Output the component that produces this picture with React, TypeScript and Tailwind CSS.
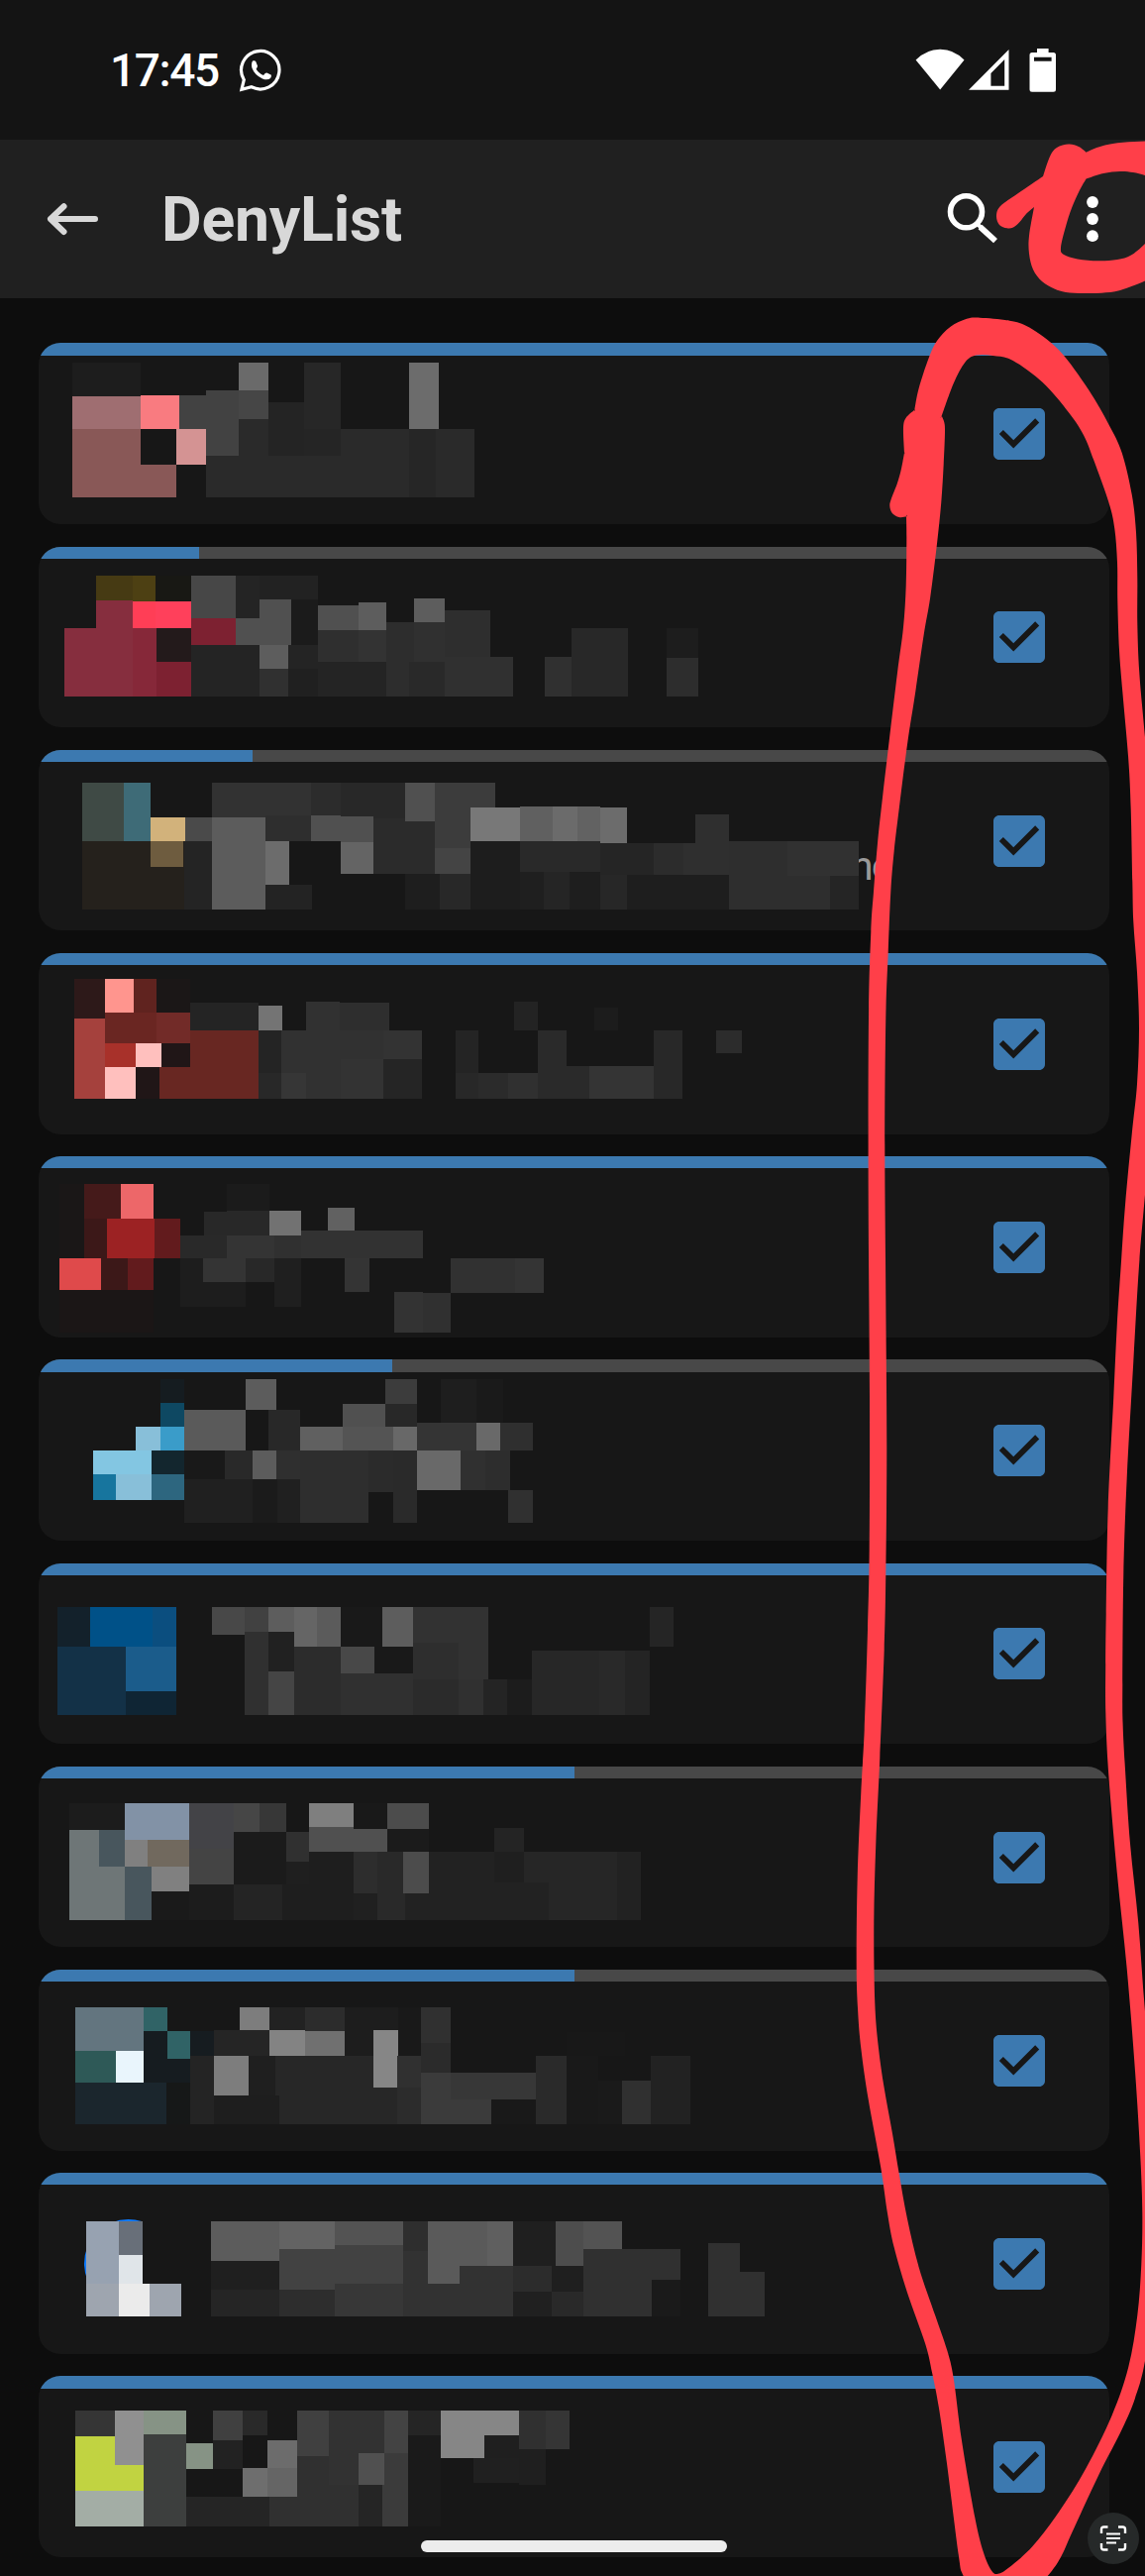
import React from "react";

type Block = [number, number, number, number, string];
type Point = [number, number];

interface Mosaic {
  /** horizontal and vertical units per pixel */
  sx: number;
  sy: number;
  /** page position of the unit origin */
  ox: number;
  oy: number;
  blocks: Block[];
}

interface App {
  progress: number;
  label?: string;
  mosaic: Mosaic;
}

const CARD_TOP = 346.4;
const CARD_PITCH = 205.2;

const narrow = (oy: number, blocks: Block[]): Mosaic => ({ sx: 2.17778, sy: 3, ox: 20, oy, blocks });
const wide = (oy: number, blocks: Block[]): Mosaic => ({ sx: 1.74222, sy: 3, ox: 20, oy, blocks });
const tall = (oy: number, blocks: Block[]): Mosaic => ({ sx: 1.96, sy: 2.48889, ox: 20, oy, blocks });

const apps: App[] = [
  {
    progress: 100,
    mosaic: narrow(330, [
      [115, 108, 266, 210, "#1d1d1d"],
      [115, 210, 266, 309, "#9f6e71"],
      [266, 207, 351, 309, "#f97b80"],
      [115, 309, 266, 516, "#895857"],
      [266, 417, 344, 516, "#895857"],
      [344, 309, 409, 417, "#d49393"],
      [351, 207, 409, 309, "#424242"],
      [409, 192, 481, 390, "#424242"],
      [481, 108, 547, 192, "#6a6a6a"],
      [481, 192, 547, 279, "#464646"],
      [481, 279, 547, 390, "#2a2a2a"],
      [409, 390, 1000, 516, "#2a2a2a"],
      [547, 228, 625, 390, "#242424"],
      [625, 108, 706, 309, "#272727"],
      [625, 309, 706, 390, "#252525"],
      [706, 309, 1000, 390, "#2a2a2a"],
      [856, 108, 921, 309, "#6c6c6c"],
      [856, 309, 915, 516, "#262626"],
    ]),
  },
  {
    progress: 15,
    mosaic: narrow(330, [
      [168, 753, 248, 828, "#463a13"],
      [248, 753, 298, 831, "#4d4013"],
      [298, 753, 377, 831, "#181814"],
      [168, 828, 248, 912, "#862e3e"],
      [98, 912, 248, 1119, "#862e3e"],
      [248, 831, 298, 912, "#ff3e56"],
      [298, 831, 377, 912, "#ff405b"],
      [248, 912, 301, 1119, "#862839"],
      [301, 912, 377, 1014, "#231a1b"],
      [301, 1014, 377, 1119, "#7d2131"],
      [377, 753, 475, 882, "#474747"],
      [377, 882, 475, 963, "#7d2131"],
      [475, 753, 527, 882, "#242424"],
      [527, 753, 656, 825, "#222222"],
      [527, 825, 597, 963, "#505050"],
      [475, 882, 527, 963, "#505050"],
      [597, 825, 656, 963, "#1b1b1b"],
      [377, 963, 527, 1119, "#242424"],
      [527, 963, 590, 1035, "#5d5d5d"],
      [527, 1035, 590, 1119, "#303030"],
      [590, 963, 656, 1035, "#242424"],
      [590, 1035, 656, 1119, "#202020"],
      [656, 843, 745, 918, "#505050"],
      [745, 834, 806, 918, "#5d5d5d"],
      [656, 918, 745, 1014, "#2f2f2f"],
      [745, 918, 806, 1014, "#333333"],
      [656, 1014, 806, 1119, "#242424"],
      [806, 894, 867, 1119, "#2d2d2d"],
      [867, 822, 934, 894, "#5d5d5d"],
      [867, 894, 934, 1014, "#303030"],
      [856, 1014, 934, 1119, "#292929"],
      [934, 858, 1034, 999, "#2e2e2e"],
      [934, 999, 1085, 1119, "#303030"],
      [1154, 999, 1213, 1119, "#303030"],
      [1213, 912, 1337, 1119, "#282828"],
      [1422, 912, 1492, 1002, "#1d1d1d"],
      [1422, 1002, 1492, 1119, "#2d2d2d"],
    ]),
  },
  {
    progress: 20,
    label: "ne",
    mosaic: wide(740, [
      [110, 150, 183, 327, "#3f4a45"],
      [183, 150, 230, 327, "#3e6b77"],
      [230, 255, 291, 327, "#d2b27b"],
      [291, 255, 338, 327, "#4a4a4a"],
      [110, 327, 289, 534, "#25211c"],
      [230, 327, 287, 405, "#6e5c3f"],
      [289, 327, 338, 534, "#242424"],
      [338, 150, 512, 255, "#323232"],
      [512, 150, 564, 249, "#2c2c2c"],
      [564, 150, 678, 258, "#282828"],
      [338, 255, 432, 534, "#5c5c5c"],
      [432, 249, 512, 327, "#2e2e2e"],
      [432, 327, 474, 459, "#6c6c6c"],
      [432, 459, 514, 534, "#232323"],
      [512, 249, 564, 327, "#505050"],
      [564, 252, 622, 330, "#505050"],
      [564, 330, 622, 426, "#646464"],
      [622, 258, 730, 426, "#2b2b2b"],
      [678, 150, 730, 267, "#505050"],
      [730, 150, 836, 348, "#3c3c3c"],
      [730, 348, 793, 426, "#444444"],
      [793, 225, 880, 327, "#787878"],
      [880, 222, 937, 327, "#606060"],
      [937, 222, 981, 327, "#6b6b6b"],
      [981, 222, 1021, 327, "#626262"],
      [1021, 225, 1068, 333, "#6c6c6c"],
      [678, 426, 739, 534, "#1e1e1e"],
      [739, 426, 793, 534, "#282828"],
      [793, 327, 880, 534, "#1d1d1d"],
      [880, 327, 1021, 420, "#292929"],
      [1021, 333, 1115, 429, "#252525"],
      [1115, 333, 1167, 429, "#2c2c2c"],
      [1167, 333, 1247, 429, "#2f2f2f"],
      [1188, 246, 1247, 333, "#2f2f2f"],
      [880, 420, 922, 534, "#1f1f1f"],
      [922, 420, 967, 534, "#252525"],
      [967, 420, 1021, 534, "#1e1e1e"],
      [1021, 429, 1068, 534, "#272727"],
      [1068, 429, 1247, 534, "#1e1e1e"],
      [1247, 327, 1350, 534, "#2e2e2e"],
      [1350, 327, 1476, 432, "#313131"],
      [1350, 432, 1425, 534, "#2e2e2e"],
      [1425, 432, 1476, 534, "#252525"],
    ]),
  },
  {
    progress: 100,
    mosaic: wide(740, [
      [96, 744, 150, 864, "#2d1919"],
      [150, 744, 200, 846, "#ff958e"],
      [200, 744, 240, 846, "#60231f"],
      [240, 744, 300, 846, "#1b1717"],
      [96, 864, 150, 1107, "#a5413d"],
      [150, 846, 240, 939, "#6a2622"],
      [240, 846, 300, 939, "#722b28"],
      [150, 939, 204, 1011, "#a8312a"],
      [204, 939, 249, 1011, "#ffc0be"],
      [249, 939, 300, 1011, "#201617"],
      [150, 1011, 204, 1107, "#ffc0be"],
      [204, 1011, 246, 1107, "#201617"],
      [300, 816, 420, 900, "#242424"],
      [300, 900, 420, 1107, "#682722"],
      [246, 1011, 300, 1107, "#682722"],
      [420, 825, 462, 900, "#747474"],
      [420, 900, 460, 1029, "#242424"],
      [420, 1029, 460, 1107, "#282828"],
      [460, 900, 639, 1107, "#313131"],
      [460, 1029, 504, 1107, "#363636"],
      [564, 987, 639, 1107, "#333333"],
      [504, 813, 563, 900, "#313131"],
      [563, 816, 650, 900, "#2e2e2e"],
      [639, 900, 707, 987, "#333333"],
      [639, 987, 707, 1107, "#252525"],
      [767, 900, 807, 1029, "#242424"],
      [767, 1029, 807, 1107, "#282828"],
      [807, 1029, 859, 1107, "#2b2b2b"],
      [859, 1029, 911, 1107, "#303030"],
      [869, 813, 911, 900, "#232323"],
      [911, 900, 962, 1107, "#2a2a2a"],
      [962, 1008, 1002, 1107, "#2a2a2a"],
      [1010, 831, 1052, 900, "#1c1c1c"],
      [1002, 1008, 1115, 1107, "#343434"],
      [1115, 900, 1166, 1107, "#282828"],
      [1225, 900, 1270, 969, "#2c2c2c"],
    ]),
  },
  {
    progress: 100,
    mosaic: narrow(1150, [
      [87, 135, 142, 360, "#1a1717"],
      [142, 135, 222, 240, "#451a1a"],
      [222, 135, 294, 240, "#ed6769"],
      [142, 240, 192, 360, "#3c1818"],
      [192, 240, 296, 360, "#9c2223"],
      [296, 240, 353, 360, "#621b1d"],
      [87, 360, 179, 456, "#df4a4b"],
      [179, 360, 237, 456, "#3c1818"],
      [237, 360, 294, 456, "#621b1d"],
      [87, 456, 294, 585, "#1b1616"],
      [455, 135, 549, 216, "#1b1b1b"],
      [405, 219, 455, 291, "#282828"],
      [455, 216, 549, 291, "#282828"],
      [549, 216, 618, 291, "#727272"],
      [677, 207, 736, 276, "#616161"],
      [353, 291, 455, 360, "#292929"],
      [455, 291, 560, 360, "#343434"],
      [560, 291, 618, 360, "#303030"],
      [618, 276, 886, 360, "#323232"],
      [353, 360, 497, 507, "#1d1d1d"],
      [403, 360, 497, 432, "#343434"],
      [497, 360, 560, 432, "#282828"],
      [560, 360, 618, 507, "#1f1f1f"],
      [714, 360, 769, 462, "#343434"],
      [823, 462, 886, 585, "#333333"],
      [886, 465, 947, 585, "#303030"],
      [947, 360, 1089, 465, "#313131"],
      [1089, 360, 1152, 465, "#343434"],
    ]),
  },
  {
    progress: 33,
    mosaic: narrow(1150, [
      [309, 726, 362, 798, "#151c20"],
      [309, 798, 362, 870, "#0e4862"],
      [255, 870, 309, 942, "#88bfd9"],
      [309, 870, 362, 942, "#3a9cc9"],
      [161, 942, 290, 1014, "#83c6e2"],
      [290, 942, 362, 1014, "#13262e"],
      [161, 1014, 211, 1092, "#17759e"],
      [211, 1014, 290, 1092, "#88bfd9"],
      [290, 1014, 362, 1092, "#2d667f"],
      [362, 819, 497, 942, "#5a5a5a"],
      [497, 726, 564, 819, "#5c5c5c"],
      [547, 819, 616, 942, "#282828"],
      [616, 870, 710, 942, "#606060"],
      [710, 801, 804, 870, "#505050"],
      [710, 870, 821, 942, "#545454"],
      [804, 726, 873, 801, "#3c3c3c"],
      [804, 801, 873, 870, "#282828"],
      [821, 870, 873, 942, "#686868"],
      [926, 726, 1004, 858, "#1e1e1e"],
      [1004, 726, 1063, 858, "#1a1a1a"],
      [873, 858, 1004, 942, "#343434"],
      [1004, 858, 1056, 942, "#696969"],
      [1056, 858, 1128, 942, "#2f2f2f"],
      [362, 942, 451, 1029, "#191919"],
      [451, 942, 512, 1029, "#292929"],
      [512, 942, 564, 1029, "#5c5c5c"],
      [564, 942, 616, 1029, "#2f2f2f"],
      [362, 1029, 512, 1161, "#202020"],
      [512, 1029, 566, 1161, "#1b1b1b"],
      [566, 1029, 616, 1161, "#202020"],
      [616, 942, 767, 1161, "#2e2e2e"],
      [767, 942, 821, 1068, "#2b2b2b"],
      [821, 942, 873, 1161, "#2a2a2a"],
      [873, 942, 969, 1062, "#696969"],
      [969, 942, 1024, 1062, "#303030"],
      [1024, 942, 1078, 1062, "#2d2d2d"],
      [1074, 1062, 1128, 1161, "#303030"],
    ]),
  },
  {
    progress: 100,
    mosaic: narrow(1560, [
      [83, 186, 155, 306, "#13212b"],
      [155, 186, 292, 306, "#005188"],
      [292, 186, 344, 306, "#0b4e7f"],
      [83, 306, 233, 513, "#133147"],
      [233, 306, 344, 441, "#1b5c8b"],
      [233, 441, 344, 513, "#0f2534"],
      [422, 186, 494, 270, "#484848"],
      [494, 186, 547, 261, "#414141"],
      [547, 186, 603, 261, "#5d5d5d"],
      [603, 186, 653, 306, "#656565"],
      [653, 186, 706, 306, "#5b5b5b"],
      [706, 186, 797, 306, "#191919"],
      [797, 186, 865, 306, "#5d5d5d"],
      [494, 261, 547, 513, "#303030"],
      [547, 261, 603, 381, "#212121"],
      [547, 381, 603, 513, "#454545"],
      [603, 306, 706, 513, "#2c2c2c"],
      [706, 306, 780, 387, "#484848"],
      [780, 306, 865, 387, "#191919"],
      [706, 387, 865, 513, "#303030"],
      [865, 186, 1030, 405, "#323232"],
      [865, 294, 965, 405, "#2e2e2e"],
      [865, 405, 965, 513, "#2b2b2b"],
      [965, 405, 1019, 513, "#303030"],
      [1019, 405, 1071, 513, "#242424"],
      [1071, 405, 1126, 513, "#1c1c1c"],
      [1126, 318, 1275, 513, "#272727"],
      [1275, 318, 1331, 513, "#292929"],
      [1331, 318, 1385, 513, "#242424"],
      [1385, 186, 1437, 306, "#252525"],
    ]),
  },
  {
    progress: 50,
    mosaic: narrow(1560, [
      [109, 780, 231, 861, "#1c1c1c"],
      [231, 780, 372, 891, "#8292a6"],
      [109, 861, 231, 1134, "#6e7677"],
      [174, 861, 231, 972, "#48565d"],
      [231, 891, 281, 972, "#808080"],
      [281, 891, 372, 972, "#71695e"],
      [231, 972, 290, 1134, "#48565d"],
      [290, 972, 372, 1047, "#808080"],
      [290, 1047, 372, 1134, "#1a1a1a"],
      [372, 780, 470, 918, "#434347"],
      [372, 918, 470, 1026, "#444444"],
      [372, 1026, 470, 1134, "#1c1c1c"],
      [470, 780, 527, 867, "#464646"],
      [527, 780, 586, 867, "#373737"],
      [470, 867, 586, 1026, "#1b1b1b"],
      [586, 867, 636, 957, "#303030"],
      [586, 957, 636, 1026, "#1f1f1f"],
      [636, 780, 734, 852, "#7f7f7f"],
      [636, 852, 734, 927, "#505050"],
      [734, 780, 808, 858, "#191919"],
      [734, 858, 808, 927, "#505050"],
      [808, 780, 899, 858, "#4c4c4c"],
      [808, 858, 899, 927, "#1b1b1b"],
      [470, 1026, 577, 1134, "#242424"],
      [577, 1026, 636, 1134, "#1e1e1e"],
      [636, 927, 734, 1134, "#1e1e1e"],
      [734, 927, 786, 1053, "#2d2d2d"],
      [786, 927, 843, 1053, "#292929"],
      [843, 927, 899, 1053, "#4c4c4c"],
      [734, 1053, 786, 1134, "#202020"],
      [786, 1053, 847, 1134, "#292929"],
      [847, 1053, 899, 1134, "#222222"],
      [899, 927, 1163, 1134, "#222222"],
      [1043, 855, 1108, 927, "#242424"],
      [1043, 927, 1108, 1020, "#1f1f1f"],
      [1108, 927, 1163, 1020, "#262626"],
      [1163, 927, 1313, 1134, "#262626"],
      [1313, 927, 1365, 1134, "#222222"],
    ]),
  },
  {
    progress: 50,
    mosaic: tall(1970, [
      [110, 139, 245, 249, "#63757f"],
      [245, 139, 292, 199, "#306366"],
      [245, 199, 337, 329, "#161c20"],
      [292, 199, 337, 269, "#306366"],
      [337, 199, 384, 261, "#161c20"],
      [110, 249, 190, 329, "#2e5957"],
      [190, 249, 245, 329, "#e9f5fc"],
      [110, 329, 290, 433, "#1b262d"],
      [290, 329, 337, 433, "#161818"],
      [435, 139, 494, 197, "#7d7d7d"],
      [384, 197, 494, 261, "#252525"],
      [494, 139, 564, 197, "#222222"],
      [564, 139, 643, 199, "#2c2c2c"],
      [494, 197, 564, 261, "#838383"],
      [564, 199, 643, 261, "#707070"],
      [643, 139, 749, 261, "#1d1d1d"],
      [749, 139, 794, 261, "#191919"],
      [337, 261, 384, 433, "#242424"],
      [384, 361, 514, 433, "#1e1e1e"],
      [453, 261, 506, 361, "#1f1f1f"],
      [384, 261, 453, 361, "#7d7d7d"],
      [506, 261, 747, 361, "#272727"],
      [514, 361, 747, 433, "#272727"],
      [700, 197, 749, 341, "#868686"],
      [747, 261, 794, 341, "#303030"],
      [747, 341, 794, 433, "#2c2c2c"],
      [794, 139, 853, 230, "#303030"],
      [794, 230, 853, 304, "#2b2b2b"],
      [794, 304, 933, 433, "#3b3b3b"],
      [853, 304, 1021, 371, "#373737"],
      [933, 371, 1021, 433, "#191919"],
      [1021, 261, 1082, 433, "#2a2a2a"],
      [1082, 203, 1197, 261, "#181818"],
      [1082, 261, 1144, 433, "#191919"],
      [1144, 324, 1192, 433, "#1a1a1a"],
      [1192, 324, 1249, 433, "#303030"],
      [1249, 261, 1327, 433, "#222222"],
    ]),
  },
  {
    progress: 100,
    mosaic: tall(1970, [
      [131, 677, 196, 836, "#97a2b1"],
      [196, 677, 243, 762, "#686f79"],
      [196, 762, 243, 836, "#e0e5e9"],
      [131, 836, 196, 916, "#9ea5af"],
      [196, 836, 257, 916, "#ebebeb"],
      [257, 836, 319, 916, "#9ea5af"],
      [378, 677, 514, 777, "#5c5c5c"],
      [514, 677, 623, 747, "#636363"],
      [623, 677, 759, 737, "#535353"],
      [759, 677, 808, 752, "#2e2e2e"],
      [808, 677, 925, 789, "#5a5a5a"],
      [808, 789, 870, 834, "#5a5a5a"],
      [925, 677, 976, 789, "#5f5f5f"],
      [976, 677, 1060, 789, "#1f1f1f"],
      [1060, 677, 1115, 789, "#4d4d4d"],
      [1115, 677, 1192, 747, "#535353"],
      [378, 777, 514, 851, "#1f1f1f"],
      [378, 851, 514, 916, "#252525"],
      [514, 747, 623, 851, "#424242"],
      [514, 851, 623, 916, "#2d2d2d"],
      [623, 737, 759, 834, "#424242"],
      [623, 834, 759, 916, "#373737"],
      [759, 752, 808, 916, "#323232"],
      [808, 834, 870, 916, "#323232"],
      [870, 789, 976, 916, "#323232"],
      [976, 789, 1053, 854, "#2c2c2c"],
      [1053, 789, 1115, 854, "#1f1f1f"],
      [976, 854, 1053, 916, "#202020"],
      [1053, 854, 1115, 916, "#292929"],
      [1115, 747, 1250, 916, "#303030"],
      [1250, 747, 1307, 826, "#303030"],
      [1250, 826, 1307, 916, "#1a1a1a"],
      [1362, 734, 1425, 804, "#303030"],
      [1362, 804, 1474, 916, "#303030"],
    ]),
  },
  {
    progress: 100,
    mosaic: tall(1970, [
      [110, 1152, 188, 1217, "#353535"],
      [110, 1217, 245, 1354, "#c1d341"],
      [188, 1152, 245, 1289, "#909090"],
      [245, 1152, 329, 1212, "#869385"],
      [110, 1354, 245, 1444, "#a3ada5"],
      [245, 1212, 329, 1444, "#3d3f3e"],
      [329, 1234, 382, 1299, "#869385"],
      [382, 1152, 441, 1227, "#404040"],
      [441, 1152, 490, 1215, "#292929"],
      [382, 1227, 441, 1299, "#222222"],
      [490, 1227, 549, 1297, "#6c6c6c"],
      [441, 1297, 490, 1369, "#6e6e6e"],
      [490, 1297, 549, 1369, "#656565"],
      [329, 1369, 494, 1444, "#252525"],
      [549, 1152, 612, 1267, "#404040"],
      [549, 1267, 612, 1444, "#303030"],
      [494, 1369, 670, 1444, "#303030"],
      [612, 1152, 721, 1339, "#323232"],
      [612, 1339, 670, 1444, "#303030"],
      [670, 1259, 721, 1339, "#505050"],
      [670, 1339, 717, 1444, "#252525"],
      [721, 1152, 768, 1259, "#434343"],
      [721, 1259, 768, 1444, "#3b3b3b"],
      [717, 1339, 721, 1444, "#3b3b3b"],
      [768, 1152, 833, 1215, "#252525"],
      [768, 1215, 833, 1444, "#1a1a1a"],
      [833, 1152, 988, 1215, "#868686"],
      [833, 1215, 919, 1272, "#868686"],
      [919, 1215, 988, 1272, "#1f1f1f"],
      [898, 1272, 988, 1334, "#202020"],
      [988, 1152, 1041, 1249, "#303030"],
      [1041, 1152, 1088, 1249, "#353535"],
      [988, 1249, 1041, 1339, "#1f1f1f"],
    ]),
  },
];

/* Closed curve through the points; a point given twice in a row is a corner. */
function smooth(points: Point[]): string {
  const n = points.length;
  let d = `M${points[0][0]} ${points[0][1]}`;
  for (let i = 0; i < n; i++) {
    const a = points[(i - 1 + n) % n];
    const b = points[i];
    const c = points[(i + 1) % n];
    const e = points[(i + 2) % n];
    d += `C${b[0] + (c[0] - a[0]) / 6} ${b[1] + (c[1] - a[1]) / 6} ${c[0] - (e[0] - b[0]) / 6} ${c[1] - (e[1] - b[1]) / 6} ${c[0]} ${c[1]}`;
  }
  return d + "Z";
}

const menuStroke: Point[] = [
  [1006, 218], [1010, 208], [1028, 195], [1053, 178], [1053, 178], [1060, 158], [1067, 149], [1079, 145.5], [1089, 148],
  [1096.6, 153.7], [1096.6, 153.7], [1109, 148.5], [1123.5, 145], [1145, 143], [1170, 144], [1190, 160], [1190, 160],
  [1170, 183], [1170, 183], [1156, 177], [1144, 174], [1131, 173], [1114, 175], [1096.6, 180.5], [1096.6, 180.5],
  [1090, 192], [1082, 210], [1075.6, 230], [1071, 250], [1074, 257], [1088, 261.5], [1109, 263.3], [1128, 262],
  [1142, 257.5], [1156, 246], [1170, 230], [1170, 230], [1190, 240], [1190, 240], [1170, 276], [1156, 283.5],
  [1131, 293], [1112, 295.7], [1094, 296], [1076, 295], [1064.5, 291.6], [1052, 284], [1043, 272], [1039, 256],
  [1039, 238], [1044, 209], [1044, 209], [1036, 216], [1029.5, 224], [1023, 229.5], [1016.6, 230.3], [1009, 227],
];

const listStrokeOuter: Point[] = [
  [898.3, 510.5], [900, 503], [906, 487.5], [910, 473], [913, 457], [913, 457], [912, 432], [914.7, 421.7],
  [923.3, 413.7], [923.3, 413.7], [927.7, 391.8], [937.7, 361.2], [946, 344], [959.3, 329.9], [976, 321.8],
  [989.3, 320.7], [1019.3, 323.7], [1039.3, 330.6], [1069.3, 353.6], [1099.3, 393.8], [1119.3, 428.2],
  [1132.7, 456.9], [1142.7, 499], [1147, 537.3], [1148.3, 583.2], [1148.3, 629], [1150.3, 678.9], [1156, 744],
  [1166, 860], [1170, 1050], [1156, 1206], [1150, 1277.6], [1144.3, 1374.5], [1137.7, 1491.8], [1134.3, 1588.8],
  [1133.3, 1700], [1133.6, 1740], [1136, 1786], [1141, 1860.7], [1149.3, 1941], [1156, 2030], [1166, 2130],
  [1168, 2300], [1156, 2383], [1146, 2420.4], [1132.7, 2452], [1109.3, 2498], [1082.7, 2555.3], [1071, 2581],
  [1057.7, 2600], [1030, 2630], [990, 2630], [972.7, 2600], [967.7, 2578.3], [956, 2486.5], [947.7, 2429],
  [941, 2394.6], [934.3, 2366], [916, 2314], [902.7, 2268.3], [896, 2233.9], [889.3, 2188], [876.7, 2119],
  [869.3, 2067.4], [866, 2027], [864.7, 1981.3], [865.7, 1895], [869.3, 1809], [872.7, 1746], [876, 1644.9],
  [877.7, 1563.3], [878, 1410], [876.7, 1206], [877, 1027.6], [879.3, 940.8], [882, 900], [886, 851], [891, 805],
  [897.7, 747.8], [906, 678.9], [912, 633], [914.7, 590.9], [915.3, 545], [915, 521.6], [915, 521.6],
  [907.7, 522], [900.8, 518],
];

const listStrokeInner: Point[] = [
  [950.7, 419.8], [950.7, 419.8], [953.3, 426.3], [954, 435.9], [952.7, 468.4], [950.3, 506.7], [946, 548.8],
  [939.3, 602.3], [932.7, 640.6], [924.3, 698], [916, 751.6], [907.7, 816.6], [902.7, 858.7], [899.3, 900],
  [896.7, 961.2], [894.3, 1027.6], [893.3, 1155], [894.3, 1308], [895.3, 1461], [894.3, 1588.8], [892.7, 1665],
  [888.3, 1774.6], [884.3, 1860.7], [882.3, 1941], [883.3, 2021.5], [887, 2067.4], [892.7, 2107.6], [901, 2153.5],
  [907.7, 2193.7], [916, 2239.6], [927.7, 2288.4], [944.3, 2337.2], [956, 2371.6], [962.7, 2400.3], [971, 2463.5],
  [984.3, 2541], [992.7, 2575.4], [1001, 2594.4], [1007.7, 2597.8], [1019.3, 2591], [1042.7, 2569.7],
  [1069.3, 2535], [1096, 2492], [1122.7, 2437.7], [1139.3, 2389], [1148.3, 2337], [1152.3, 2285.5],
  [1153.3, 2233.9], [1151.3, 2176.5], [1146, 2090.4], [1137.7, 1987], [1127.7, 1889.4], [1119.3, 1791.8],
  [1116.3, 1728.7], [1116.2, 1680], [1116.7, 1629.6], [1118.7, 1522.4], [1124.3, 1410], [1127.7, 1338.8],
  [1131.7, 1277.6], [1136, 1216.3], [1142.7, 1144.9], [1148, 1093.9], [1150, 1037.8], [1148, 981.6],
  [1144.3, 930.6], [1143.3, 890], [1141.7, 816.6], [1139.3, 766.9], [1133.3, 698], [1130, 656], [1128.3, 606],
  [1128, 568], [1125.3, 533.4], [1119.3, 506.7], [1104.3, 464.6], [1094.3, 439.7], [1079.3, 416.7], [1052.7, 386],
  [1022.7, 363.9], [1002.7, 358.9], [985.3, 358.6], [974.3, 365.8], [962.7, 387],
];

function StatusBar() {
  return (
    <div className="flex h-[141px] items-start bg-[#141414] text-white">
      <span className="ml-[111px] mt-[44px] w-[112px] whitespace-nowrap text-[46px] leading-[54px] font-medium tracking-[-1.4px]">
        17:45
      </span>
      <svg className="ml-[18px] mt-[49px] size-[44px]" viewBox="0 0 44 44" fill="none">
        <path d="M3 41.2 5.300 31.600A19.200 19.200 0 1 1 12.800 38.700Z" stroke="white" strokeWidth="3.200" strokeLinejoin="miter" />
        <path
          d="M14 12.600Q16 11.600 17.200 13L19 17.600Q19 19 17.600 20.800Q20.500 25.400 25 27Q27 24.400 28.400 24.600L32.600 26.600Q33.400 28 32 30Q29 32.400 24 30.400Q16 27 13.400 19.600Q12.400 15 14 12.600Z"
          fill="white"
        />
      </svg>
      <svg className="ml-auto mr-[88px] mt-[48px] h-[46px] w-[144px]" viewBox="924 48 144 46" fill="white">
        <path d="M924.600 60.600Q935 49.700 949.200 49.700T973.500 60.600L949.200 90.500Z" />
        <path fillRule="evenodd" d="M978 90.700 1018.500 50V90.700ZM1000.400 86.700H1014.200V60L1000.400 74Z" />
        <path
          fillRule="evenodd"
          d="M1047 49h11.600v4h4.900q2.500 0 2.500 2.500v34.700q0 2.500-2.500 2.500h-21.500q-2.500 0-2.500-2.500V55.500q0-2.500 2.500-2.500h5ZM1044 57.800V61.800H1061.600V57.800Z"
        />
      </svg>
    </div>
  );
}

function AppBar() {
  return (
    <header className="flex h-[160px] items-center bg-[#202020]">
      <svg
        className="ml-[46px] h-[36px] w-[56px]"
        viewBox="46 203 56 36"
        fill="none"
        stroke="#d8d8d8"
        strokeWidth="6"
        strokeLinecap="round"
        strokeLinejoin="round"
      >
        <path d="M96 221H51M64.500 208.200 51 221 64.500 234" />
      </svg>
      <h1 className="mt-[2px] ml-[61px] whitespace-nowrap text-[62.500px] leading-none font-bold tracking-[-0.200px] text-[#d8d8d8]">
        DenyList
      </h1>
      <svg className="ml-auto h-[56px] w-[56px]" viewBox="953 193 56 56" fill="none" stroke="white">
        <circle cx="975.500" cy="213.800" r="16" strokeWidth="5.600" />
        <path d="M986.500 226 991 230 " strokeWidth="4" />
        <path d="M989.500 229 1005 243.200" strokeWidth="5.800" />
      </svg>
      <svg className="mr-[45px] ml-[86px] h-[50px] w-[16px]" viewBox="0 0 16 50" fill="white">
        <circle cx="8" cy="8" r="5.900" />
        <circle cx="8" cy="25" r="5.900" />
        <circle cx="8" cy="42.200" r="5.900" />
      </svg>
    </header>
  );
}

function Card({ app, index }: { app: App; index: number }) {
  const { sx, sy, ox, oy, blocks } = app.mosaic;
  const top = CARD_TOP + CARD_PITCH * index + 12.3;
  return (
    <li className="flex h-[182.700px] flex-none flex-col overflow-hidden rounded-[22px] bg-[#171717]">
      <div className="h-[12.300px] flex-none bg-[#484848]">
        <div className="h-full bg-[#3c79b0]" style={{ width: `${app.progress}%` }} />
      </div>
      <div className="flex h-[170px] justify-between">
        <svg className="h-[170px] w-[880px]" viewBox="0 0 880 170">
          {index === 9 && <circle cx="90.500" cy="79.500" r="44.500" fill="#0f7bff" clipPath="url(#badge)" />}
          {index === 9 && (
            <clipPath id="badge">
              <path d="M40 50H60V120H40ZM70 20H104V45H70Z" />
            </clipPath>
          )}
          {app.label && (
            <text x="820" y="119.200" fontSize="41" letterSpacing="-2" fill="#9a9a9a">
              {app.label}
            </text>
          )}
          <g
            transform={`translate(${ox - 39} ${oy - top}) scale(${1 / sx} ${1 / sy})`}
            shapeRendering="crispEdges"
          >
            {app.label && <rect x="1400" y="327" width="76" height="207" fill="#171717" />}
            {blocks.map(([x1, y1, x2, y2, fill], i) => (
              <rect key={i} x={x1} y={y1} width={x2 - x1} height={y2 - y1} fill={fill} />
            ))}
          </g>
        </svg>
        <svg className="mt-[53.500px] mr-[65px] size-[52px]" viewBox="3 3 18 18" fill="#3c79b0">
          <path d="M19 3H5c-1.110 0-2 .9-2 2v14c0 1.100.89 2 2 2h14c1.110 0 2-.9 2-2V5c0-1.100-.89-2-2-2zm-9 14l-5-5 1.410-1.410L10 14.170l7.590-7.590L19 8l-9 9z" />
        </svg>
      </div>
    </li>
  );
}

export default function App() {
  return (
    <div className="relative flex h-[2600px] w-[1156px] flex-col overflow-hidden bg-[#0d0d0d] font-['Roboto',sans-serif]">
      <StatusBar />
      <AppBar />
      <ul className="mt-[45.400px] mr-[36px] ml-[39px] flex flex-col gap-[22.500px]">
        {apps.map((app, i) => (
          <Card key={i} app={app} index={i} />
        ))}
      </ul>

      <div className="absolute top-[2563.500px] left-[425px] h-[12px] w-[309px] rounded-full bg-[#ececec]" />

      <svg className="pointer-events-none absolute inset-0 h-[2600px] w-[1156px]" viewBox="0 0 1156 2600" fill="#ff3f49">
        <path d={smooth(menuStroke)} />
        <path fillRule="evenodd" d={smooth(listStrokeOuter) + smooth(listStrokeInner)} />
      </svg>

      <button className="absolute top-[2536px] left-[1098px] flex size-[52px] items-center justify-center rounded-full bg-[#262929]">
        <svg className="size-[28px]" viewBox="0 0 28 28" fill="none" stroke="white" strokeWidth="2.400">
          <path d="M8.500 2.500H4.500Q2 2.500 2 5V9M19 2.500H23.500Q26 2.500 26 5V9M8.500 25.500H4.500Q2 25.500 2 23V19M19 25.500H23.500Q26 25.500 26 23V19" />
          <path d="M7 9.500H21M7 14H21M7 18.500H17" strokeWidth="1.800" />
        </svg>
      </button>
    </div>
  );
}
